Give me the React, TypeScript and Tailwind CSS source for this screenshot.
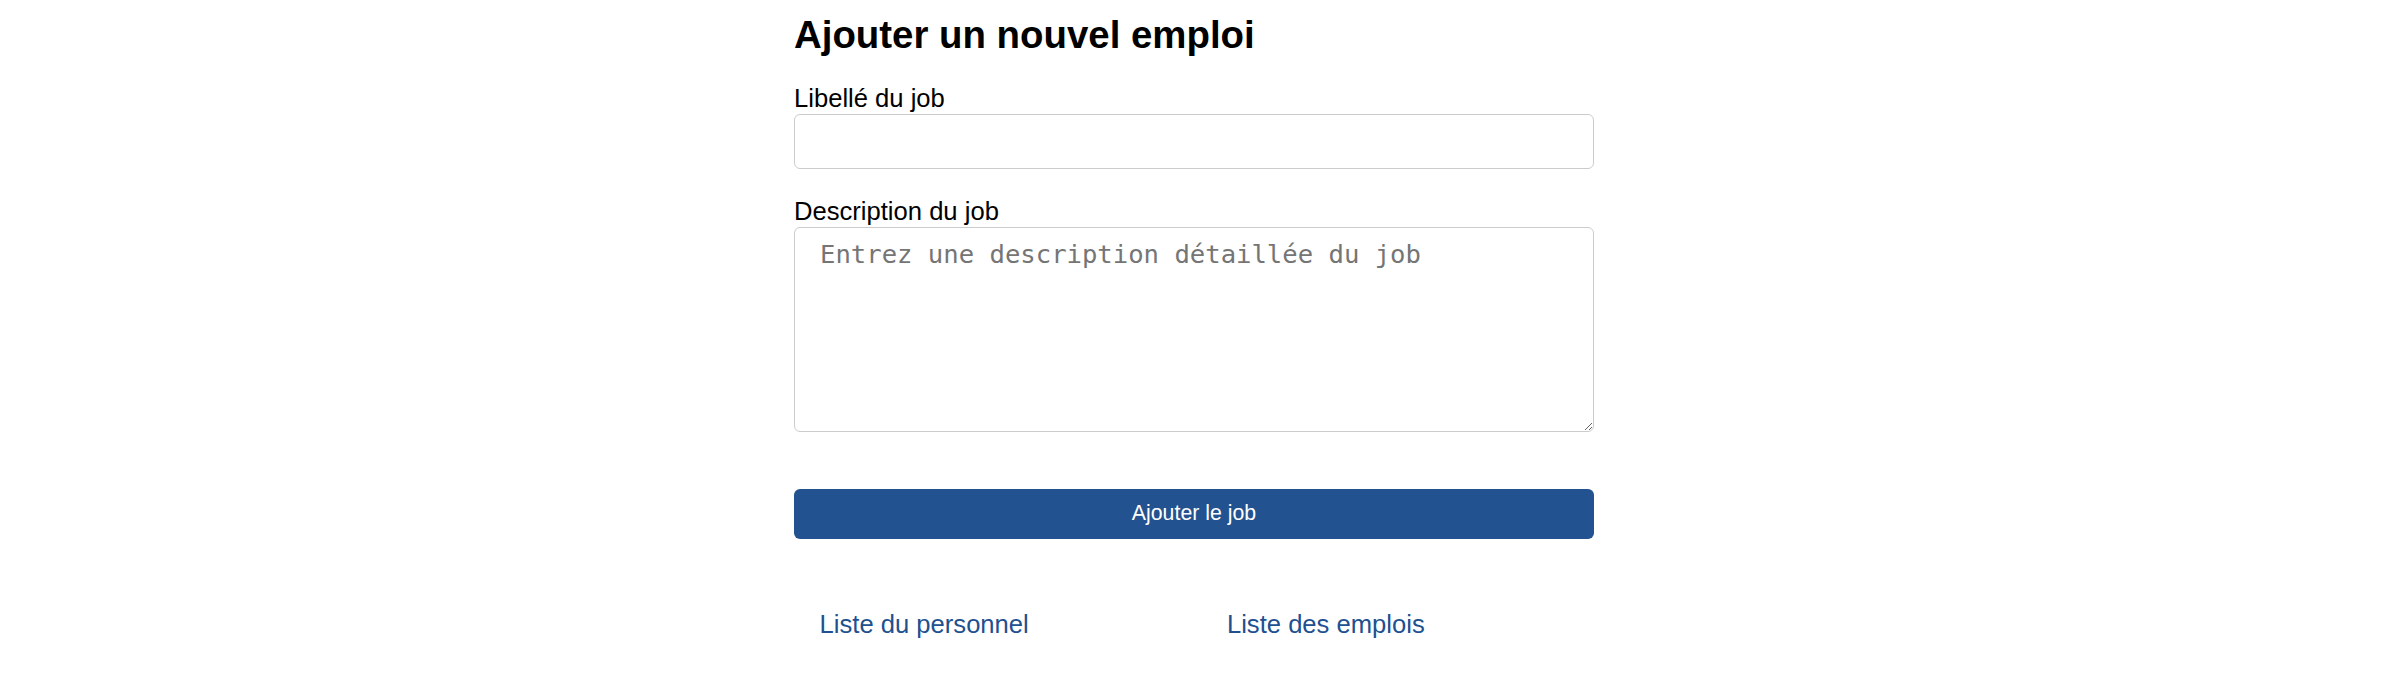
import React from "react";

const AddJobForm: React.FC = () => {
  return (
    <div className="w-[800px] font-['Liberation_Sans',Arial,sans-serif] text-black">
      <h2 className="pt-[13px] text-[38.4px] font-bold leading-[1.15]">
        Ajouter un nouvel emploi
      </h2>
      <form className="flex flex-col mt-[26px]">
        <label htmlFor="title" className="block text-[25.6px] leading-[30px]">
          Libellé du job
        </label>
        <input
          id="title"
          type="text"
          className="mt-px h-[55px] w-full rounded-[6px] border border-[#cccccc] bg-white px-4 outline-none"
        />
        <label
          htmlFor="description"
          className="block mt-[27px] text-[25.6px] leading-[30px]"
        >
          Description du job
        </label>
        <textarea
          id="description"
          placeholder="Entrez une description détaillée du job"
          className="mt-px h-[205px] w-full rounded-[6px] border border-[#cccccc] bg-white pl-[25px] pr-4 pt-[11px] font-['DejaVu_Sans_Mono',monospace] text-[25.6px] leading-[1.2] outline-none placeholder:text-[#757575]"
        />
        <button
          type="button"
          className="mt-[57px] flex h-[50px] w-full items-center justify-center rounded-[6px] bg-[#22528f] text-[21.3px] text-white"
        >
          Ajouter le job
        </button>
      </form>
      <nav className="mt-[70px] flex gap-[147px]">
        <a href="#" className="px-[25.6px] text-[25.6px] leading-[30px] text-[#21508f]">
          Liste du personnel
        </a>
        <a href="#" className="px-[25.6px] text-[25.6px] leading-[30px] text-[#21508f]">
          Liste des emplois
        </a>
      </nav>
    </div>
  );
};

export default function App() {
  return (
    <div className="min-h-screen bg-white flex justify-center pl-[2px]">
      <AddJobForm />
    </div>
  );
}
